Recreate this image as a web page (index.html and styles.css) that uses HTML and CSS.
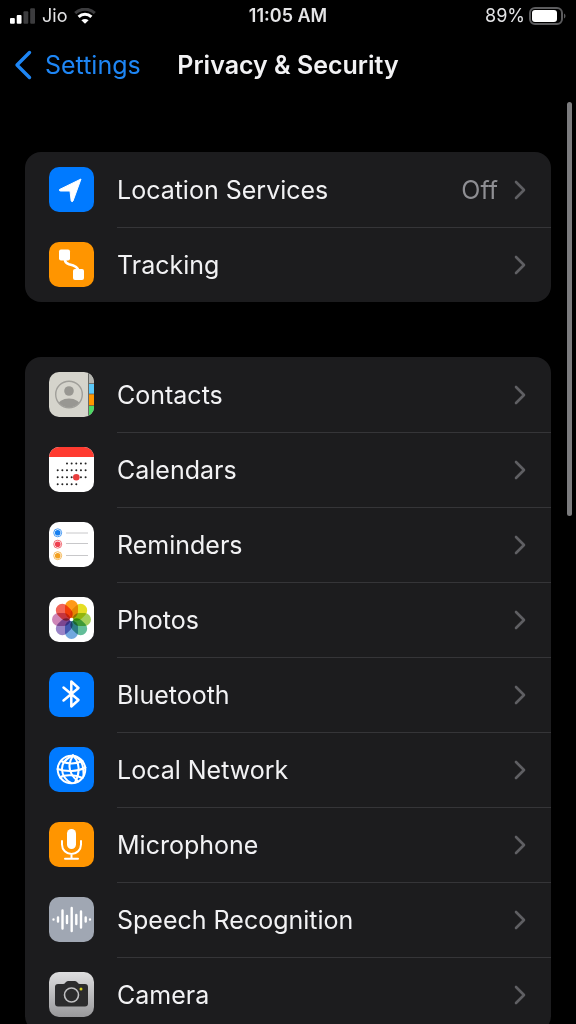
FILE: index.html
```html
<!DOCTYPE html>
<html lang="en">
<head>
    <meta charset="UTF-8">
    <meta name="viewport" content="width=device-width, initial-scale=1.0">
    <title>Privacy &amp; Security</title>
    <link rel="stylesheet" href="styles.css">
</head>
<body>
    <div class="screen">
        <!-- Status bar -->
        <div class="status-bar">
            <div class="status-left">
                <svg class="signal" width="25" height="16" viewBox="0 0 26 16">
                    <rect x="0" y="10" width="5" height="6" rx="1" fill="#fff"/>
                    <rect x="7" y="7" width="5" height="9" rx="1" fill="#fff"/>
                    <rect x="14" y="3" width="5" height="13" rx="1" fill="#3c3c3e"/>
                    <rect x="21" y="0" width="5" height="16" rx="1" fill="#3c3c3e"/>
                </svg>
                <span>Jio</span>
                <svg class="wifi" width="22" height="16" viewBox="0 0 22 16">
                    <path d="M1.2 5.2C6.8-.2 15.2-.2 20.8 5.2" fill="none" stroke="#3c3c3e" stroke-width="3"/>
                    <path d="M4.6 8.9C8.3 5.4 13.7 5.4 17.4 8.9" fill="none" stroke="#fff" stroke-width="3"/>
                    <path d="M11 15.8L7.4 12.2C9.500 10.500 12.500 10.500 14.600 12.200Z" fill="#fff"/>
                </svg>
            </div>
            <div class="status-time">11:05 AM</div>
            <div class="status-right">
                <span>89%</span>
                <svg width="37" height="18" viewBox="0 0 37 18">
                    <rect x="1" y="1" width="32" height="16" rx="5" fill="none" stroke="#5c5c5e" stroke-width="2"/>
                    <rect x="3" y="3" width="25" height="12" rx="3" fill="#fff"/>
                    <path d="M35 6.5C37 7.5 37 10.5 35 11.5Z" fill="#5c5c5e"/>
                </svg>
            </div>
        </div>

        <!-- Navigation bar -->
        <header class="nav-bar">
            <a class="back" href="#">
                <svg width="18" height="30" viewBox="0 0 18 30"><path d="M15.5 2.5L3 15L15.5 27.5" fill="none" stroke="#1e86f5" stroke-width="3.4" stroke-linecap="round" stroke-linejoin="round"/></svg>
                <span>Settings</span>
            </a>
            <h1>Privacy &amp; Security</h1>
        </header>

        <main class="content">
            <nav class="group">
                <a class="row" href="#">
                    <svg class="icon" viewBox="0 0 45 45">
                        <rect width="45" height="45" rx="10" fill="#007aff"/>
                        <path d="M32 12L10.5 22.5Q10 24 11.5 24L21 24L22.2 34Q23 35.5 24 34Z" fill="#fff" stroke="#fff" stroke-width="1" stroke-linejoin="round"/>
                    </svg>
                    <span class="label">Location Services</span>
                    <span class="value">Off</span>
                    <svg class="chevron" viewBox="0 0 12 20"><path d="M2 2L10 10L2 18"/></svg>
                </a>
                <a class="row" href="#">
                    <svg class="icon" viewBox="0 0 45 45">
                        <rect width="45" height="45" rx="10" fill="#ff9500"/>
                        <path d="M16 15V18Q16 21 20 22.2Q29 24 29.5 29V32" fill="none" stroke="#fff" stroke-width="2.6"/>
                        <rect x="10" y="7.5" width="11" height="11" rx="2" fill="#fff"/>
                        <rect x="24" y="27" width="11" height="11" rx="2" fill="#fff"/>
                    </svg>
                    <span class="label">Tracking</span>
                    <svg class="chevron" viewBox="0 0 12 20"><path d="M2 2L10 10L2 18"/></svg>
                </a>
            </nav>

            <nav class="group">
                <a class="row" href="#">
                    <svg class="icon" viewBox="0 0 45 45">
                        <clipPath id="tile"><rect width="45" height="45" rx="10"/></clipPath>
                        <clipPath id="avatar"><circle cx="20" cy="22.5" r="13"/></clipPath>
                        <g clip-path="url(#tile)">
                            <rect width="45" height="45" fill="#d5d4cc"/>
                            <rect x="39" width="6" height="12" fill="#b4b5b0"/>
                            <rect x="39" y="12" width="6" height="10" fill="#5ac8fa"/>
                            <rect x="39" y="22" width="6" height="12" fill="#ff9500"/>
                            <rect x="39" y="34" width="6" height="11" fill="#4cd964"/>
                            <path d="M39.5 0V45" stroke="#686a66" stroke-width="1"/>
                            <path d="M40 11.5H45M40 22H45M40 33.5H45" stroke="#565656" stroke-width=".7"/>
                        </g>
                        <g clip-path="url(#avatar)" fill="#989792">
                            <circle cx="20" cy="19" r="4.8"/>
                            <ellipse cx="20" cy="34" rx="11.500" ry="7.500"/>
                        </g>
                        <circle cx="20" cy="22.5" r="13.3" fill="none" stroke="#a09f9a" stroke-width="1.4"/>
                    </svg>
                    <span class="label">Contacts</span>
                    <svg class="chevron" viewBox="0 0 12 20"><path d="M2 2L10 10L2 18"/></svg>
                </a>
                <a class="row" href="#">
                    <svg class="icon" viewBox="0 0 45 45">
                        <rect width="45" height="45" rx="10" fill="#fff"/>
                        <path d="M0 10A10 10 0 0 1 10 0H35A10 10 0 0 1 45 10Z" fill="#ff3b30"/>
                        <g fill="none" stroke="#222" stroke-width="2" stroke-linecap="round">
                            <path d="M18 16.5H37" stroke-dasharray="0 4.65"/>
                            <path d="M8.7 23.3H37" stroke-dasharray="0 4.65"/>
                            <path d="M8.7 30.2H37" stroke-dasharray="0 4.65"/>
                            <path d="M8.7 37.2H28" stroke-dasharray="0 4.65"/>
                        </g>
                        <circle cx="27.3" cy="30.2" r="3.3" fill="#e83e3e"/>
                    </svg>
                    <span class="label">Calendars</span>
                    <svg class="chevron" viewBox="0 0 12 20"><path d="M2 2L10 10L2 18"/></svg>
                </a>
                <a class="row" href="#">
                    <svg class="icon" viewBox="0 0 45 45">
                        <rect width="45" height="45" rx="10" fill="#fff"/>
                        <path d="M17 11H39M17 21.5H39M17 33.5H39" stroke="#c8c8ca" stroke-width="1"/>
                        <g fill="none" stroke-width=".8">
                            <circle cx="8.7" cy="10.8" r="4" stroke="#2587f0"/>
                            <circle cx="8.7" cy="22.2" r="4" stroke="#ef4b55"/>
                            <circle cx="8.7" cy="33.7" r="4" stroke="#f2aa35"/>
                        </g>
                        <circle cx="8.7" cy="10.8" r="2.8" fill="#1880f0"/>
                        <circle cx="8.7" cy="22.2" r="2.8" fill="#ef4050"/>
                        <circle cx="8.7" cy="33.7" r="2.8" fill="#f2a020"/>
                    </svg>
                    <span class="label">Reminders</span>
                    <svg class="chevron" viewBox="0 0 12 20"><path d="M2 2L10 10L2 18"/></svg>
                </a>
                <a class="row" href="#">
                    <svg class="icon" viewBox="0 0 45 45">
                        <rect width="45" height="45" rx="10" fill="#fff"/>
                        <g class="petals">
                            <rect x="16" y="3" width="13" height="18.500" rx="6.500" fill="#ff9a18"/>
                            <rect x="16" y="3" width="13" height="18.500" rx="6.500" fill="#e5de24" transform="rotate(45 22.5 22.5)"/>
                            <rect x="16" y="3" width="13" height="18.500" rx="6.500" fill="#a3d05a" transform="rotate(90 22.5 22.5)"/>
                            <rect x="16" y="3" width="13" height="18.500" rx="6.500" fill="#62bd98" transform="rotate(135 22.5 22.5)"/>
                            <rect x="16" y="3" width="13" height="18.500" rx="6.500" fill="#71a8df" transform="rotate(180 22.5 22.5)"/>
                            <rect x="16" y="3" width="13" height="18.500" rx="6.500" fill="#9a84c7" transform="rotate(225 22.5 22.5)"/>
                            <rect x="16" y="3" width="13" height="18.500" rx="6.500" fill="#ce86b8" transform="rotate(270 22.5 22.5)"/>
                            <rect x="16" y="3" width="13" height="18.500" rx="6.500" fill="#f26558" transform="rotate(315 22.5 22.5)"/>
                        </g>
                        <circle cx="22.5" cy="22.5" r="1.8" fill="#fff"/>
                    </svg>
                    <span class="label">Photos</span>
                    <svg class="chevron" viewBox="0 0 12 20"><path d="M2 2L10 10L2 18"/></svg>
                </a>
                <a class="row" href="#">
                    <svg class="icon" viewBox="0 0 45 45">
                        <rect width="45" height="45" rx="10" fill="#007aff"/>
                        <path d="M14.500 15.500L29.500 28L22.300 34.500V9.500L29.500 16L14.500 28.500" fill="none" stroke="#fff" stroke-width="2.5" stroke-linecap="round" stroke-linejoin="round"/>
                    </svg>
                    <span class="label">Bluetooth</span>
                    <svg class="chevron" viewBox="0 0 12 20"><path d="M2 2L10 10L2 18"/></svg>
                </a>
                <a class="row" href="#">
                    <svg class="icon" viewBox="0 0 45 45">
                        <rect width="45" height="45" rx="10" fill="#007aff"/>
                        <g fill="none" stroke="#fff" stroke-width="2" stroke-linecap="round">
                            <circle cx="22.5" cy="22.5" r="13.8"/>
                            <path d="M24 8.5C16 12 12.500 17 13 23C13.500 28 16.500 33 22 36"/>
                            <path d="M24 8.5C18 18 20 27 29 34.5"/>
                            <path d="M24 8.5C30 14 32 25 26 35.5"/>
                            <path d="M24 8.5C31 11 35 16 34.5 29"/>
                            <path d="M12 14C19 17.5 27 17 33.5 14"/>
                            <path d="M8.5 22C17 25 28 25 36.5 20.5"/>
                            <path d="M11 30.5C16 27 27 28 33.5 31"/>
                        </g>
                    </svg>
                    <span class="label">Local Network</span>
                    <svg class="chevron" viewBox="0 0 12 20"><path d="M2 2L10 10L2 18"/></svg>
                </a>
                <a class="row" href="#">
                    <svg class="icon" viewBox="0 0 45 45">
                        <rect width="45" height="45" rx="10" fill="#ff9500"/>
                        <rect x="18" y="7" width="9" height="20" rx="4.5" fill="#fff"/>
                        <path d="M13 19V22.5A9.5 9.5 0 0 0 32 22.5V19M22.5 32V36.5M16 36.7H29" fill="none" stroke="#fff" stroke-width="2" stroke-linecap="round"/>
                    </svg>
                    <span class="label">Microphone</span>
                    <svg class="chevron" viewBox="0 0 12 20"><path d="M2 2L10 10L2 18"/></svg>
                </a>
                <a class="row" href="#">
                    <svg class="icon" viewBox="0 0 45 45">
                        <rect width="45" height="45" rx="10" fill="#a0a7b3"/>
                        <path d="M4.5 22.4V22.6M9 20.5V24.5M13.5 13.5V31.5M18 19V26M22.7 11V34M27.3 18V27M32 14.5V30.5M36.7 20.5V24.5M41 22.4V22.6" fill="none" stroke="#fff" stroke-width="2.4" stroke-linecap="round"/>
                    </svg>
                    <span class="label">Speech Recognition</span>
                    <svg class="chevron" viewBox="0 0 12 20"><path d="M2 2L10 10L2 18"/></svg>
                </a>
                <a class="row" href="#">
                    <svg class="icon" viewBox="0 0 45 45">
                        <linearGradient id="silver" x1="0" y1="0" x2="0" y2="1">
                            <stop offset="0" stop-color="#dededf"/>
                            <stop offset="1" stop-color="#98989b"/>
                        </linearGradient>
                        <rect width="45" height="45" rx="10" fill="url(#silver)"/>
                        <path d="M9 12H14Q15.5 12 16.5 10.5Q17.5 9 19 9H26Q27.5 9 28.5 10.5Q29.5 12 31 12H36Q39 12 39 15V31.5Q39 34.5 36 34.5H9Q6 34.5 6 31.5V15Q6 12 9 12Z" fill="#2c2c2d"/>
                        <circle cx="22.5" cy="23" r="7" fill="none" stroke="#c0c0c2" stroke-width="1.6"/>
                        <circle cx="32" cy="17" r="1.5" fill="#d6cf1f"/>
                    </svg>
                    <span class="label">Camera</span>
                    <svg class="chevron" viewBox="0 0 12 20"><path d="M2 2L10 10L2 18"/></svg>
                </a>
            </nav>
        </main>
        <div class="scroll-indicator"></div>
    </div>
</body>
</html>
```
FILE: styles.css
```css
* { box-sizing: border-box; }
body { margin: 0; background-color: #000; color: #f2f2f4; font-family: Inter, "Liberation Sans", sans-serif; font-size: 25px; }
a { color: inherit; text-decoration: none; }
svg { display: block; flex: none; }
.screen { position: relative; display: flex; flex-direction: column; height: 100vh; overflow: hidden; }

.status-bar { display: grid; grid-template-columns: 1fr auto 1fr; align-items: center; height: 32px; padding: 0 10px; font-size: 18px; line-height: 32px; color: #e4e4e6; }
.status-left { display: flex; align-items: center; gap: 7px; }
.status-time { font-weight: 600; }
.status-right { display: flex; align-items: center; justify-content: flex-end; gap: 4px; }

.nav-bar { display: grid; grid-template-columns: 1fr auto 1fr; align-items: center; flex: none; height: 66px; padding: 0 14px; }
.back { display: flex; align-items: center; gap: 13px; color: #1e86f5; }
.nav-bar h1 { margin: 0; font-size: 25px; font-weight: 600; white-space: nowrap; }

.content { flex: 1; min-height: 0; padding: 54px 25px 0; overflow-y: auto; scrollbar-width: none; }
.group { margin-bottom: 55px; border-radius: 16px; background-color: #1c1c1e; overflow: hidden; }
.row { display: grid; grid-template-columns: 45px 1fr auto 12px; column-gap: 23px; align-items: center; height: 75px; padding: 0 25px 0 24px; }
.row + .row { background: linear-gradient(#353538, #353538) 92px 0 / 100% 1px no-repeat; }
.icon { width: 45px; height: 45px; }
.label { white-space: nowrap; }
.value { color: #8e8e93; margin-right: -7px; }
.chevron { grid-column: 4; width: 12px; height: 20px; fill: none; stroke: #5f5f63; stroke-width: 2.6; stroke-linecap: round; stroke-linejoin: round; }
.petals rect { mix-blend-mode: multiply; }

.scroll-indicator { position: absolute; top: 10%; right: 4px; width: 5px; height: 414px; border-radius: 3px; background-color: #7c7c7e; }
```
